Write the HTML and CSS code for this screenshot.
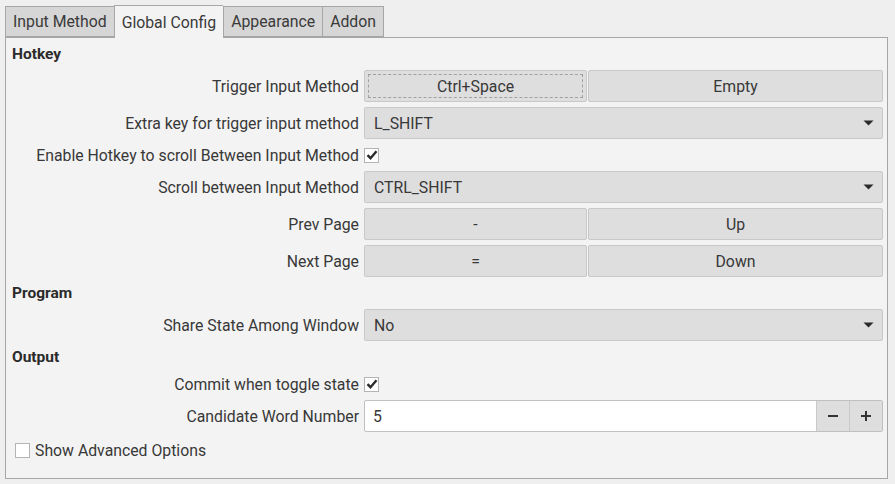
FILE: index.html
```html
<!DOCTYPE html>
<html>
<head>
<meta charset="utf-8">
<link rel="stylesheet" href="styles.css">
</head>
<body>
<div class="window">
  <div class="tabs">
    <div class="tab">Input Method</div>
    <div class="tab active">Global Config</div>
    <div class="tab">Appearance</div>
    <div class="tab">Addon</div>
  </div>
  <div class="pane">
    <div class="header">Hotkey</div>
    <div class="row">
      <div class="label">Trigger Input Method</div>
      <div class="field pair">
        <div class="btn focus"><span>Ctrl+Space</span></div>
        <div class="btn">Empty</div>
      </div>
    </div>
    <div class="row">
      <div class="label">Extra key for trigger input method</div>
      <div class="field combo"><span>L_SHIFT</span><svg class="arrow" width="11" height="7" viewBox="0 0 11 7"><path d="M0.5 0.5h10l-5 5z" fill="#2a2a2a"/></svg></div>
    </div>
    <div class="row short">
      <div class="label">Enable Hotkey to scroll Between Input Method</div>
      <div class="field"><span class="check on"><svg width="12" height="12" viewBox="0 0 12 12"><path d="M1.5 6.2l3 3 6-7" fill="none" stroke="#2b2b2b" stroke-width="2.4"/></svg></span></div>
    </div>
    <div class="row">
      <div class="label">Scroll between Input Method</div>
      <div class="field combo"><span>CTRL_SHIFT</span><svg class="arrow" width="11" height="7" viewBox="0 0 11 7"><path d="M0.5 0.5h10l-5 5z" fill="#2a2a2a"/></svg></div>
    </div>
    <div class="row">
      <div class="label">Prev Page</div>
      <div class="field pair">
        <div class="btn">-</div>
        <div class="btn">Up</div>
      </div>
    </div>
    <div class="row">
      <div class="label">Next Page</div>
      <div class="field pair">
        <div class="btn">=</div>
        <div class="btn">Down</div>
      </div>
    </div>
    <div class="header">Program</div>
    <div class="row">
      <div class="label">Share State Among Window</div>
      <div class="field combo"><span>No</span><svg class="arrow" width="11" height="7" viewBox="0 0 11 7"><path d="M0.5 0.5h10l-5 5z" fill="#2a2a2a"/></svg></div>
    </div>
    <div class="header">Output</div>
    <div class="row short">
      <div class="label">Commit when toggle state</div>
      <div class="field"><span class="check on"><svg width="12" height="12" viewBox="0 0 12 12"><path d="M1.5 6.2l3 3 6-7" fill="none" stroke="#2b2b2b" stroke-width="2.4"/></svg></span></div>
    </div>
    <div class="row">
      <div class="label">Candidate Word Number</div>
      <div class="field spin">
        <div class="spin-value">5</div>
        <div class="spin-btn"><svg width="12" height="12" viewBox="0 0 12 12"><path d="M1 6h10" stroke="#333" stroke-width="2"/></svg></div>
        <div class="spin-btn"><svg width="12" height="12" viewBox="0 0 12 12"><path d="M1 6h10M6 1v10" stroke="#333" stroke-width="2"/></svg></div>
      </div>
    </div>
    <div class="advanced">
      <span class="check"></span>
      <span>Show Advanced Options</span>
    </div>
  </div>
</div>
</body>
</html>
```

FILE: styles.css
```css
* { box-sizing: border-box; }
html, body {
  margin: 0;
  padding: 0;
  background: #efefef;
  font-family: Roboto, "Noto Sans", sans-serif;
  font-size: 15.8px;
  color: #383838;
}
.window {
  padding: 5px 0 0 5px;
  width: 895px;
  height: 484px;
}
.tabs {
  display: flex;
  align-items: flex-end;
  height: 32px;
  position: relative;
  z-index: 1;
}
.tab {
  height: 31px;
  padding: 0 7px;
  background: #d6d6d6;
  border: 1px solid #a6a6a6;
  border-right: none;
  display: flex;
  align-items: center;
  color: #3a3a3a;
}
.tab:last-child { border-right: 1px solid #a6a6a6; }
.tab.active {
  background: #f3f3f3;
  border-bottom: none;
  margin-bottom: -1px;
  height: 33px;
}
.tab.active + .tab { border-left: 1px solid #a6a6a6; }
.pane {
  width: 883px;
  height: 442px;
  border: 1px solid #a6a6a6;
  background: #f3f3f3;
  padding: 5px 4px 0 0;
  display: flex;
  flex-direction: column;
  gap: 5px;
}
.header {
  height: 22px;
  display: flex;
  align-items: center;
  padding-left: 6px;
  font-weight: bold;
  font-size: 15.5px;
  color: #2b2b2b;
}
.row {
  height: 32px;
  display: grid;
  grid-template-columns: 353px 1fr;
  column-gap: 5px;
}
.row.short { height: 22px; }
.label {
  display: flex;
  align-items: center;
  justify-content: flex-end;
  white-space: nowrap;
}
.field {
  display: flex;
  align-items: center;
}
.pair { gap: 1px; }
.btn {
  flex: 1;
  height: 32px;
  background: #dedede;
  border: 1px solid #c8c8c8;
  border-radius: 2px;
  display: flex;
  align-items: center;
  justify-content: center;
}
.pair .btn:first-child { flex: 0 0 223px; }
.btn.focus { padding: 3px; }
.btn.focus span {
  flex: 1;
  align-self: stretch;
  display: flex;
  align-items: center;
  justify-content: center;
  border: 1px dashed #a0a0a0;
}
.combo {
  height: 32px;
  background: #dedede;
  border: 1px solid #c8c8c8;
  border-radius: 2px;
  padding: 0 8px 0 9px;
  justify-content: space-between;
}
.arrow { margin-top: 1px; }
.check {
  width: 15px;
  height: 15px;
  background: #ffffff;
  border: 1px solid #b4b4b4;
  display: inline-flex;
  align-items: center;
  justify-content: center;
}
.spin {
  height: 32px;
  border: 1px solid #c0c0c0;
  border-radius: 2px;
  background: #ffffff;
}
.spin-value {
  flex: 1;
  padding-left: 8px;
  display: flex;
  align-items: center;
  height: 100%;
}
.spin-btn {
  width: 33px;
  height: 100%;
  background: #dedede;
  border-left: 1px solid #cacaca;
  display: flex;
  align-items: center;
  justify-content: center;
}
.advanced {
  height: 22px;
  margin-top: 2px;
  display: flex;
  align-items: center;
  gap: 5px;
  padding-left: 9px;
}
```
